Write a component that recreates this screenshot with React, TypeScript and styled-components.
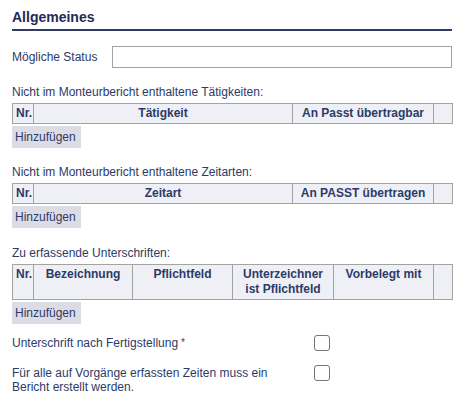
import React from 'react';
import styled, { createGlobalStyle } from 'styled-components';

const GlobalStyle = createGlobalStyle`
  body {
    margin: 0;
    background: #ffffff;
    font-family: "Liberation Sans", Arial, sans-serif;
  }
`;

const textColor = '#2c3a68';
const borderColor = '#a3a3a3';

const Page = styled.div`
  width: 440px;
  padding: 0 0 0 12px;
  font-size: 12px;
  color: ${textColor};
`;

const Heading = styled.h2`
  margin: 0;
  padding: 8px 0 3px;
  font-size: 14px;
  line-height: 18px;
  font-weight: bold;
  color: #1e2b55;
  border-bottom: 2px solid #2f3b63;
`;

const StatusRow = styled.div`
  display: flex;
  align-items: center;
  margin-top: 15px;
`;

const FieldLabel = styled.label`
  width: 100px;
  line-height: 16px;
`;

const TextInput = styled.input`
  box-sizing: border-box;
  width: 340px;
  height: 22px;
  margin: 0;
  border: 1px solid ${borderColor};
  background: #fff;
  font: inherit;
`;

const SectionLabel = styled.div<{ $top: number }>`
  margin-top: ${(p) => p.$top}px;
  margin-bottom: 3px;
  line-height: 16px;
`;

const Grid = styled.table`
  width: 440px;
  border-collapse: collapse;
  table-layout: fixed;
  background: #eff0f6;
`;

const HeadCell = styled.th<{ $align?: string }>`
  border: 1px solid ${borderColor};
  padding: 2px 3px;
  font-size: 12px;
  line-height: 15px;
  font-weight: bold;
  color: ${textColor};
  text-align: ${(p) => p.$align || 'center'};
  vertical-align: top;
`;

const AddButton = styled.button`
  display: block;
  box-sizing: border-box;
  width: 69px;
  height: 22px;
  margin-top: 2px;
  padding: 0 3px;
  border: none;
  background: #dcdde4;
  font-family: "Liberation Sans", Arial, sans-serif;
  font-size: 12px;
  color: ${textColor};
  text-align: left;
`;

const OptionRow = styled.div<{ $top: number }>`
  display: flex;
  align-items: flex-start;
  margin-top: ${(p) => p.$top}px;
`;

const OptionText = styled.div`
  width: 290px;
  line-height: 14px;
  padding-top: 1px;
`;

const Star = styled.span`
  margin-left: 3px;
  font-size: 10px;
  vertical-align: top;
`;

const CheckBox = styled.input.attrs({ type: 'checkbox' })`
  appearance: none;
  box-sizing: border-box;
  width: 16px;
  height: 16px;
  margin: 0 0 0 12px;
  border: 1.5px solid #767676;
  border-radius: 3px;
  background: #fff;
  flex: none;
`;

type Column = { label: React.ReactNode; width: number; align?: string };

function HeaderTable({ columns }: { columns: Column[] }) {
  return (
    <Grid>
      <colgroup>
        {columns.map((c, i) => (
          <col key={i} style={{ width: c.width }} />
        ))}
      </colgroup>
      <thead>
        <tr>
          {columns.map((c, i) => (
            <HeadCell key={i} $align={c.align}>
              {c.label}
            </HeadCell>
          ))}
        </tr>
      </thead>
    </Grid>
  );
}

const activities: Column[] = [
  { label: 'Nr.', width: 21, align: 'left' },
  { label: 'Tätigkeit', width: 259 },
  { label: 'An Passt übertragbar', width: 141 },
  { label: '', width: 19 },
];

const timeTypes: Column[] = [
  { label: 'Nr.', width: 21, align: 'left' },
  { label: 'Zeitart', width: 259 },
  { label: 'An PASST übertragen', width: 141 },
  { label: '', width: 19 },
];

const signatures: Column[] = [
  { label: 'Nr.', width: 21, align: 'left' },
  { label: 'Bezeichnung', width: 99 },
  { label: 'Pflichtfeld', width: 100 },
  {
    label: (
      <>
        Unterzeichner
        <br />
        ist Pflichtfeld
      </>
    ),
    width: 101,
  },
  { label: 'Vorbelegt mit', width: 100 },
  { label: '', width: 19 },
];

export default function App() {
  return (
    <>
      <GlobalStyle />
      <Page>
        <Heading>Allgemeines</Heading>
        <StatusRow>
          <FieldLabel>Mögliche Status</FieldLabel>
          <TextInput />
        </StatusRow>

        <SectionLabel $top={16}>Nicht im Monteurbericht enthaltene Tätigkeiten:</SectionLabel>
        <HeaderTable columns={activities} />
        <AddButton>Hinzufügen</AddButton>

        <SectionLabel $top={16}>Nicht im Monteurbericht enthaltene Zeitarten:</SectionLabel>
        <HeaderTable columns={timeTypes} />
        <AddButton>Hinzufügen</AddButton>

        <SectionLabel $top={17}>Zu erfassende Unterschriften:</SectionLabel>
        <HeaderTable columns={signatures} />
        <AddButton>Hinzufügen</AddButton>

        <OptionRow $top={11}>
          <OptionText>
            Unterschrift nach Fertigstellung<Star>*</Star>
          </OptionText>
          <CheckBox />
        </OptionRow>
        <OptionRow $top={14}>
          <OptionText>Für alle auf Vorgänge erfassten Zeiten muss ein Bericht erstellt werden.</OptionText>
          <CheckBox />
        </OptionRow>
      </Page>
    </>
  );
}
